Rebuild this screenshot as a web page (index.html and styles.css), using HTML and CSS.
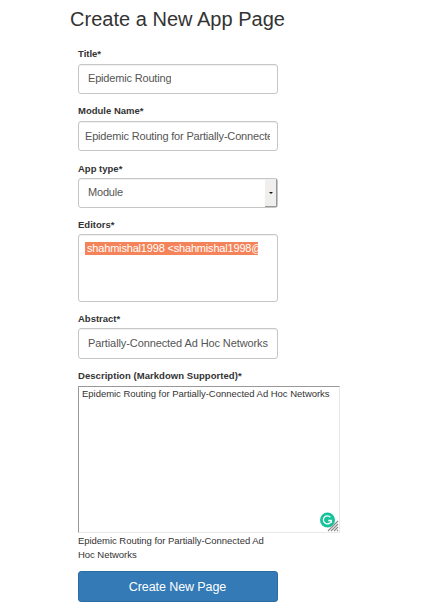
FILE: index.html
```html
<!DOCTYPE html>
<html lang="en">
<head>
<meta charset="utf-8">
<title>Create a New App Page</title>
<link rel="stylesheet" href="styles.css">
</head>
<body>
<main class="page">
  <h1 class="heading">Create a New App Page</h1>
  <form class="form">
    <div class="field title">
      <label class="label">Title*</label>
      <div class="control raised"><span class="value">Epidemic Routing</span></div>
    </div>
    <div class="field module">
      <label class="label">Module Name*</label>
      <div class="control tight"><span class="value">Epidemic Routing for Partially-Connecte</span></div>
    </div>
    <div class="field type">
      <label class="label">App type*</label>
      <div class="control select"><span class="value lifted">Module</span><span class="arrow"><i class="caret"></i></span></div>
    </div>
    <div class="field editors">
      <label class="label">Editors*</label>
      <div class="control list"><span class="option">shahmishal1998 &lt;shahmishal1998@</span></div>
    </div>
    <div class="field abstract">
      <label class="label">Abstract*</label>
      <div class="control"><span class="value">Partially-Connected Ad Hoc Networks</span></div>
    </div>
    <div class="field description">
      <label class="label">Description (Markdown Supported)*</label>
      <div class="textarea">
        <span class="text">Epidemic Routing for Partially-Connected Ad Hoc Networks</span>
        <svg class="corner" width="20" height="20" viewBox="0 0 20 20">
          <circle cx="8.5" cy="8" r="7.5" fill="#15c39a"/>
          <path d="M11.3 5.2A4 4 0 1 0 12.3 8.5H9.2M12.4 8v3" fill="none" stroke="#fff" stroke-width="1.3"/>
          <path d="M9 19L19 9V19Z" fill="#fff"/>
          <path d="M9 19L19 9M12 19l7-7M15 19l4-4M18 19l1-1" stroke="#888" stroke-width="1.1"/>
        </svg>
      </div>
    </div>
    <p class="preview">Epidemic Routing for Partially-Connected Ad Hoc Networks</p>
    <button class="submit" type="button">Create New Page</button>
  </form>
</main>
</body>
</html>
```
FILE: styles.css
```css
* { box-sizing: border-box; }

body {
  margin: 0;
  background: #fff;
  color: #333;
  font-family: "Liberation Sans", Arial, sans-serif;
}

.page { height: 608px; padding: 7px 0 0 70px; overflow: hidden; }

.heading {
  height: 24px;
  margin: 0;
  font-size: 20px;
  font-weight: 400;
  line-height: 24px;
  letter-spacing: 0.02px;
  white-space: nowrap;
}

.form { width: 208px; padding: 16px 0 0 8px; }

.field { display: flex; flex-direction: column; }

.label {
  height: 17px;
  font-size: 9.5px;
  font-weight: 700;
  line-height: 14px;
  white-space: nowrap;
}

.type .label,
.editors .label,
.abstract .label { line-height: 16px; }

.description .label { letter-spacing: 0.05px; }

.control {
  display: flex;
  align-items: center;
  width: 200px;
  height: 30px;
  padding: 0 9px;
  border: 1px solid #c6c6c6;
  border-radius: 3px;
  box-shadow: inset 0 1px 1px rgba(0, 0, 0, 0.06);
  color: #555;
  font-size: 11px;
  line-height: 14px;
  letter-spacing: -0.18px;
  white-space: nowrap;
}

.value { overflow: hidden; }

.title { margin-bottom: 10px; }
.module { margin-bottom: 10px; }
.type { margin-bottom: 9px; }
.editors { margin-bottom: 9px; }
.abstract { margin-bottom: 10px; }

.raised { padding-bottom: 2px; }
.lifted { padding-bottom: 2px; }

.tight { padding: 0 7px 0 6px; }

.select { justify-content: space-between; padding-right: 0; }

.arrow {
  display: flex;
  align-items: center;
  justify-content: center;
  width: 12px;
  height: 28px;
  border-right: 1px solid #999;
  border-bottom: 1px solid #999;
  background: #f0efee;
}

.caret {
  border: 2px solid transparent;
  border-top-color: #111;
  border-bottom: 0;
}

.list { align-items: flex-start; height: 68px; padding: 7px 19px 0 6px; }

.option {
  width: 173px;
  height: 13px;
  padding-left: 2px;
  overflow: hidden;
  background: #f58359;
  color: #fff;
  line-height: 13px;
}

.abstract .control { height: 31px; padding-bottom: 1px; letter-spacing: -0.1px; }

.textarea {
  position: relative;
  width: 262px;
  height: 147px;
  padding: 1px 3px;
  border: 1px solid #e8e8e8;
  border-top-color: #999;
  border-left-color: #999;
  font-size: 9.5px;
  line-height: 12px;
  letter-spacing: -0.03px;
  white-space: nowrap;
}

.text { display: block; }

.corner { position: absolute; right: 0; bottom: 0; }

.preview {
  width: 200px;
  margin: 1px 0 9px;
  font-size: 9.5px;
  line-height: 14px;
  letter-spacing: -0.04px;
}

.submit {
  display: block;
  width: 200px;
  height: 31px;
  padding: 0 1px 0 0;
  border: 1px solid #2e6da4;
  border-radius: 3px;
  background: #337ab7;
  color: #fff;
  font-family: inherit;
  font-size: 12.5px;
  letter-spacing: -0.08px;
}
```
